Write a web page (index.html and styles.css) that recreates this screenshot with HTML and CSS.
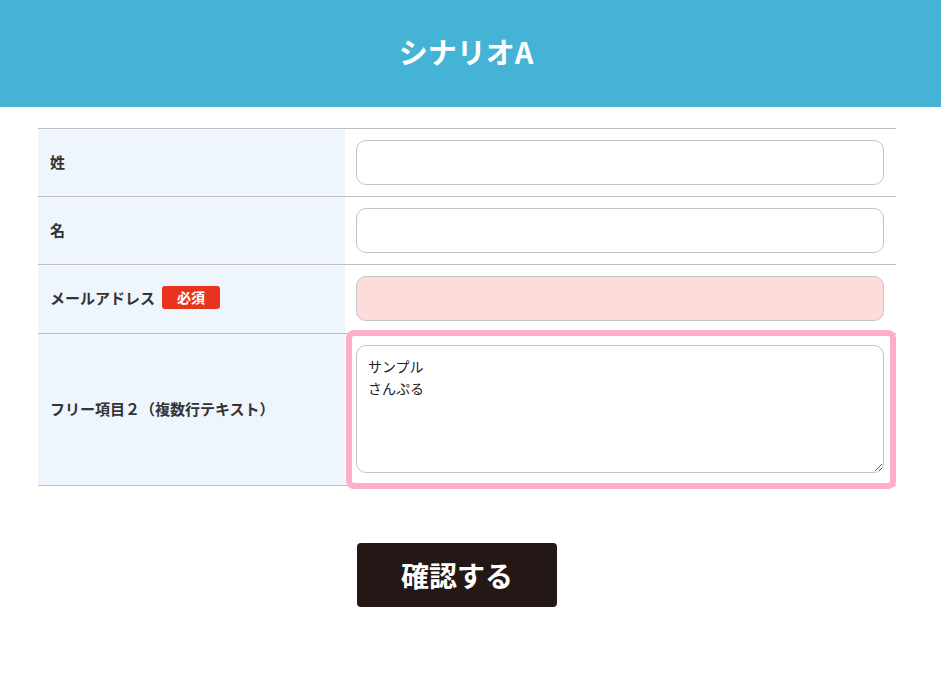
FILE: index.html
```html
<!DOCTYPE html>
<html lang="ja">
<head>
<meta charset="utf-8">
<title>シナリオA</title>
<link rel="stylesheet" href="styles.css">
</head>
<body>
<header class="header"><h1 class="title">シナリオA</h1></header>
<main class="main">
  <div class="form">
    <div class="row">
      <div class="label">姓</div>
      <div class="field"><input class="input" type="text"></div>
    </div>
    <div class="row">
      <div class="label">名</div>
      <div class="field"><input class="input" type="text"></div>
    </div>
    <div class="row">
      <div class="label">メールアドレス<span class="badge">必須</span></div>
      <div class="field field-tall"><input class="input input-required" type="text"></div>
    </div>
    <div class="row">
      <div class="label">フリー項目２（複数行テキスト）</div>
      <div class="field field-highlight"><textarea class="textarea">サンプル
さんぷる</textarea></div>
    </div>
  </div>
  <div class="actions"><button class="submit" type="button">確認する</button></div>
</main>
</body>
</html>
```
FILE: styles.css
```css
* { box-sizing: border-box; }
body {
  margin: 0;
  font-family: "Noto Sans CJK JP", "Noto Sans", sans-serif;
  color: #333;
  background: #fff;
}
.header {
  height: 107px;
  background: #44b3d5;
  display: flex;
  align-items: center;
  justify-content: center;
  padding-bottom: 4px;
  padding-right: 9px;
}
.title {
  margin: 0;
  color: #fff;
  font-size: 29px;
  font-weight: 700;
  line-height: 1;
}
.main {
  padding-top: 21px;
}
.form {
  margin-left: 38px;
  width: 858px;
  border-top: 1px solid #bdbdbd;
}
.row {
  display: grid;
  grid-template-columns: 307px 1fr;
  border-bottom: 1px solid #bdbdbd;
}
.label {
  background: #eef5fc;
  display: flex;
  align-items: center;
  padding-left: 12px;
  padding-bottom: 3px;
  font-size: 15px;
  font-weight: 700;
  color: #333;
}
.badge {
  margin-left: 7px;
  background: #e8341f;
  color: #fff;
  font-size: 14px;
  font-weight: 700;
  border-radius: 3px;
  padding: 0 15px;
  height: 23px;
  line-height: 23px;
}
.field {
  padding: 11px 12px 11px 11px;
}
.field-tall {
  padding-bottom: 12px;
}
.field-highlight {
  position: relative;
  padding-bottom: 12px;
}
.field-highlight::after {
  content: "";
  position: absolute;
  left: 1px;
  right: 0;
  top: -4px;
  bottom: -4px;
  border: 6px solid #ffadc9;
  border-radius: 8px;
  pointer-events: none;
}
.input {
  display: block;
  width: 100%;
  height: 45px;
  border: 1px solid #c3c3c3;
  border-radius: 10px;
  background: #fff;
  font: inherit;
  padding: 0 11px;
}
.input-required {
  background: #ffdcdc;
}
.textarea {
  display: block;
  width: 100%;
  height: 128px;
  border: 1px solid #c3c3c3;
  border-radius: 10px;
  background: #fff;
  font-family: "Noto Sans CJK JP", sans-serif;
  font-size: 14px;
  line-height: 22px;
  color: #222;
  padding: 9px 11px;
  resize: vertical;
}
.actions {
  margin-top: 57px;
  padding-left: 357px;
}
.submit {
  width: 200px;
  height: 64px;
  border: 0;
  border-radius: 4px;
  background: #231815;
  color: #fff;
  font-family: "Noto Sans CJK JP", sans-serif;
  font-size: 28px;
  font-weight: 700;
  cursor: pointer;
}
```
